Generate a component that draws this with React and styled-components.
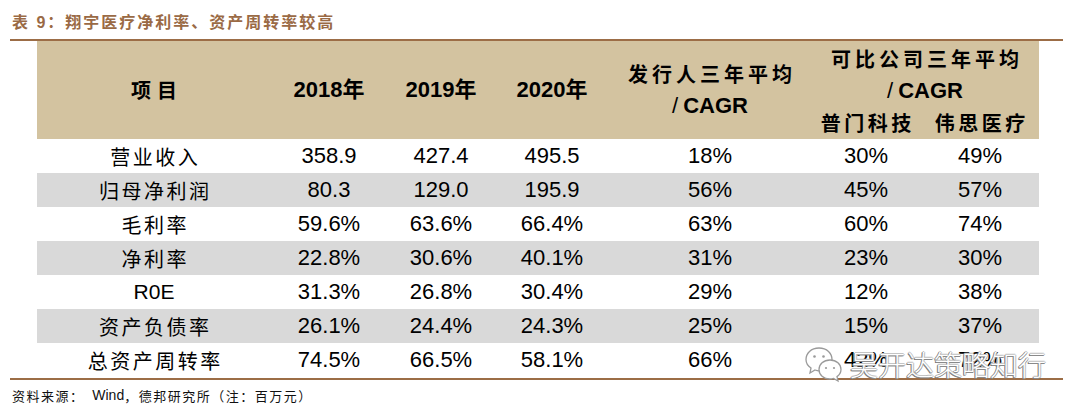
import React from "react";
import styled, { createGlobalStyle } from "styled-components";

const Global = createGlobalStyle`
  html, body { margin: 0; padding: 0; background: #fff; }
  body { font-family: "Liberation Sans", "Noto Sans CJK SC", sans-serif; color: #000; }
`;

const Page = styled.div`
  width: 1080px;
  height: 415px;
  padding: 0 17px 0 10px;
  box-sizing: border-box;
  position: relative;
`;

const Title = styled.div`
  height: 39px;
  display: flex;
  align-items: center;
  padding-left: 2px;
  padding-top: 2px;
  box-sizing: border-box;
  font-family: "Liberation Sans", "Noto Sans CJK SC", sans-serif;
  font-weight: 700;
  font-size: 16px;
  letter-spacing: 2px;
  color: #9a6a45;
`;

const Rule = styled.div`
  height: 2px;
  background: #9c6d46;
`;

const Table = styled.div`
  margin-left: 27px;
  display: grid;
  grid-template-columns: 234px 116px 108px 114px 202px 110px 118px;
  width: 1002px;
`;

const Head = styled.div`
  grid-column: ${(p) => p.$col};
  grid-row: ${(p) => p.$row};
  background: #d3c3a0;
  display: flex;
  flex-direction: column;
  align-items: center;
  justify-content: center;
  font-weight: 700;
  font-size: 21px;
  line-height: 32px;
  text-align: center;
  padding-top: ${(p) => p.$pt || 0}px;
`;

const HeadCn = styled.span`
  font-family: "Noto Sans CJK SC", sans-serif;
  font-weight: 700;
  font-size: 20px;
  letter-spacing: ${(p) => p.$ls ?? 4}px;
  margin-right: -${(p) => p.$ls ?? 4}px;
`;

const Year = styled.span`
  font-family: "Liberation Sans", "Noto Sans CJK SC", sans-serif;
  font-weight: 700;
  font-size: 22px;
`;

const Slash = styled.span`
  font-weight: 400;
  margin-right: 5px;
`;

const Row = styled.div`
  display: contents;
`;

const Cell = styled.div`
  height: 34px;
  display: flex;
  align-items: center;
  justify-content: center;
  background: ${(p) => (p.$alt ? "#d9d9d9" : "#fff")};
  font-family: "Liberation Sans", sans-serif;
  font-size: 22px;
`;

const Label = styled(Cell)`
  font-family: "Noto Sans CJK SC", sans-serif;
  font-size: 20px;
  font-weight: 400;
  letter-spacing: 2.5px;
`;

const LabelText = styled.span`
  margin-right: -2.5px;
`;

const LatinLabel = styled.span`
  font-family: "Liberation Sans", sans-serif;
  letter-spacing: 0;
  font-size: 21px;
`;

const BottomRule = styled(Rule)`
  margin-top: 1px;
`;

const Note = styled.div`
  padding-left: 2px;
  height: 30px;
  display: flex;
  align-items: center;
  font-size: 14px;
  color: #111;
`;

const NoteCn = styled.span`
  font-family: "Noto Sans CJK SC", sans-serif;
  font-size: 13px;
  letter-spacing: 1.5px;
`;

const Watermark = styled.div`
  position: absolute;
  left: 804px;
  top: 344px;
  display: flex;
  align-items: center;
  gap: 6px;
  pointer-events: none;
`;

const WmText = styled.span`
  font-family: "Noto Sans CJK SC", sans-serif;
  font-weight: 300;
  font-size: 28px;
  color: #fff;
  text-shadow: -1px 0 0 #8a8a8a, 0 1px 0 #8a8a8a, 1px 0 0 #c4c4c4, 0 -1px 0 #c4c4c4, -1px 1px 0 #777;
`;

const WeChat = () => (
  <svg width="40" height="40" viewBox="0 0 40 40">
    <g fill="#fff" stroke="#9a9a9a" strokeWidth="1.3">
      <path d="M15 4 C7 4 2 9.5 2 15.5 C2 19 4 22 7 24 L6 29 L11 26 C12.5 26.5 14 26.8 15 26.8 C23 26.8 28 21.5 28 15.5 C28 9.5 23 4 15 4 Z" />
      <path d="M26 16 C19.5 16 15 20.3 15 25.5 C15 30.7 19.5 35 26 35 C27.3 35 28.5 34.8 29.6 34.4 L34 37 L33 32.6 C35.5 30.8 37 28.3 37 25.5 C37 20.3 32.5 16 26 16 Z" />
    </g>
    <g fill="#9a9a9a">
      <circle cx="10.5" cy="12.5" r="1.3" />
      <circle cx="19.5" cy="12.5" r="1.3" />
      <circle cx="22" cy="24" r="1.1" />
      <circle cx="30" cy="24" r="1.1" />
    </g>
  </svg>
);

const rows = [
  ["营业收入", "358.9", "427.4", "495.5", "18%", "30%", "49%"],
  ["归母净利润", "80.3", "129.0", "195.9", "56%", "45%", "57%"],
  ["毛利率", "59.6%", "63.6%", "66.4%", "63%", "60%", "74%"],
  ["净利率", "22.8%", "30.6%", "40.1%", "31%", "23%", "30%"],
  ["ROE", "31.3%", "26.8%", "30.4%", "29%", "12%", "38%"],
  ["资产负债率", "26.1%", "24.4%", "24.3%", "25%", "15%", "37%"],
  ["总资产周转率", "74.5%", "66.5%", "58.1%", "66%", "42%", "72%"],
];

export default function App() {
  return (
    <Page>
      <Global />
      <Title>表 9：翔宇医疗净利率、资产周转率较高</Title>
      <Rule />
      <Table>
        <Head $col="1" $row="1 / span 2" style={{ height: 98 }}>
          <HeadCn $ls={6}>项目</HeadCn>
        </Head>
        <Head $col="2" $row="1 / span 2"><Year>2018年</Year></Head>
        <Head $col="3" $row="1 / span 2"><Year>2019年</Year></Head>
        <Head $col="4" $row="1 / span 2"><Year>2020年</Year></Head>
        <Head $col="5" $row="1 / span 2">
          <HeadCn>发行人三年平均</HeadCn>
          <Year><Slash>/</Slash>CAGR</Year>
        </Head>
        <Head $col="6 / span 2" $row="1" $pt={2}>
          <HeadCn>可比公司三年平均</HeadCn>
          <Year><Slash>/</Slash>CAGR</Year>
        </Head>
        <Head $col="6" $row="2"><HeadCn $ls={3.5}>普门科技</HeadCn></Head>
        <Head $col="7" $row="2"><HeadCn $ls={3.5}>伟思医疗</HeadCn></Head>
        {rows.map((r, i) => {
          const alt = i % 2 === 1;
          return (
            <Row key={r[0]}>
              <Label $alt={alt}>
                {r[0] === "ROE" ? <LatinLabel>R0E</LatinLabel> : <LabelText>{r[0]}</LabelText>}
              </Label>
              {r.slice(1).map((v, j) => (
                <Cell key={j} $alt={alt}>{v}</Cell>
              ))}
            </Row>
          );
        })}
      </Table>
      <BottomRule />
      <Note>
        <NoteCn>资料来源：</NoteCn>&nbsp;&nbsp;Wind<NoteCn>，德邦研究所（注：百万元）</NoteCn>
      </Note>
      <Watermark>
        <WeChat />
        <WmText>吴开达策略知行</WmText>
      </Watermark>
    </Page>
  );
}
